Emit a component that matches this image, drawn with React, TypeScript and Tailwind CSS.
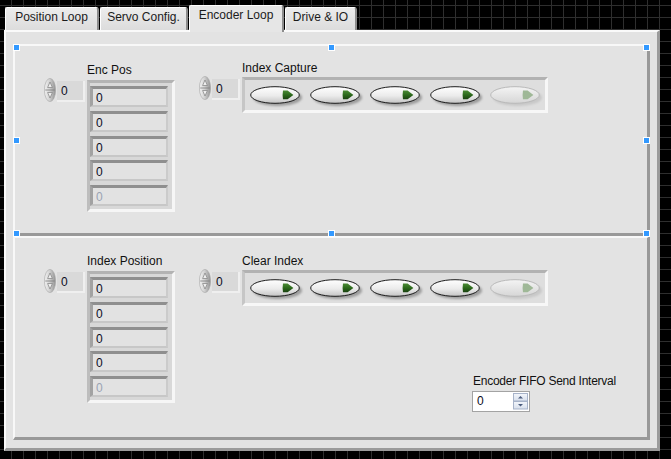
import React from "react";

const tabs = [
  { label: "Position Loop", w: "w-[94px]" },
  { label: "Servo Config.", w: "w-[88px]" },
  { label: "Encoder Loop", w: "w-[95px]", active: true },
  { label: "Drive & IO", w: "w-[72px]" },
];

function Tab({ label, w, active }: { label: string; w: string; active?: boolean }) {
  if (active) {
    return (
      <div
        className={`${w} relative z-10 -mb-[2px] ml-[1px] h-[27px] border-t border-l border-t-white border-l-white border-r-2 border-r-[#8c8c8c] rounded-tr-[3px] rounded-tl-[2px] bg-[#e6e6e6] pt-[2px] text-center text-[12px] leading-[14px] text-[#1b1b1b]`}
      >
        {label}
      </div>
    );
  }
  return (
    <div
      className={`${w} ml-[1px] first:ml-0 h-[23px] border-t border-l border-t-white border-l-white border-r-2 border-r-[#8c8c8c] rounded-tr-[3px] rounded-tl-[2px] bg-[linear-gradient(#ececec,#dcdcdc)] pt-[2px] text-center text-[12px] leading-[14px] text-[#1b1b1b]`}
    >
      {label}
    </div>
  );
}

/** LabVIEW index spinner */
function Spinner() {
  return (
    <svg width="12" height="24" viewBox="0 0 12 24" className="shrink-0">
      <defs>
        <linearGradient id="spin" x1="0" x2="1" y1="0" y2="0">
          <stop offset="0" stopColor="#f4f4f4" />
          <stop offset="0.45" stopColor="#d2d2d2" />
          <stop offset="1" stopColor="#929292" />
        </linearGradient>
      </defs>
      <ellipse cx="6" cy="12" rx="5.6" ry="11.6" fill="url(#spin)" stroke="#a4a4a4" strokeWidth="0.6" />
      <path d="M3.6 9.5 L6 4 L8.4 9.5 Z" fill="#eeeeee" stroke="#808080" strokeWidth="0.7" />
      <line x1="1.2" x2="10.8" y1="12" y2="12" stroke="#7c7c7c" strokeWidth="0.8" />
      <path d="M3.6 14.5 L6 20 L8.4 14.5 Z" fill="#eeeeee" stroke="#808080" strokeWidth="0.7" />
    </svg>
  );
}

function IndexBox() {
  return (
    <div className="ml-[1px] mt-[3px] h-[21px] w-[28px] shrink-0 border-r-2 border-b-2 border-r-[#efefef] border-b-[#efefef] bg-[#d9d9d9] pl-[4px] pt-[3px] text-[12px] leading-[14px] text-[#0c0c22]">
      0
    </div>
  );
}

function NumArray() {
  return (
    <div className="flex w-[88px] flex-col gap-[3.75px] border-t-[3px] border-l-[3px] border-r-[3px] border-b-[3px] border-t-[#b3b3b3] border-l-[#bdbdbd] border-r-[#f6f6f6] border-b-[#f6f6f6] bg-[#d8d8d8] pt-[3px] pb-[3px]">
      {[0, 1, 2, 3, 4].map((i) => (
        <div
          key={i}
          className={`h-[21px] w-[78px] border-t-[3px] border-l-[3px] border-r-2 border-b-2 border-t-[#8f8f8f] border-l-[#a2a2a2] border-r-[#cbcbcb] border-b-[#c7c7c7] bg-[#e2e2e2] pl-[3px] pt-[2px] text-[12px] leading-[14px] ${
            i === 4 ? "text-[#9aa3b2]" : "text-[#0c0c22]"
          }`}
        >
          0
        </div>
      ))}
    </div>
  );
}

function LedButton({ disabled }: { disabled?: boolean }) {
  return (
    <svg width="56" height="22" viewBox="0 0 56 22" className="shrink-0">
      <defs>
        <linearGradient id="btnFace" x1="0" x2="0" y1="0" y2="1">
          <stop offset="0" stopColor="#ffffff" />
          <stop offset="0.55" stopColor="#ebebeb" />
          <stop offset="1" stopColor="#c4c4c4" />
        </linearGradient>
        <linearGradient id="btnFaceOff" x1="0" x2="0" y1="0" y2="1">
          <stop offset="0" stopColor="#f4f4f4" />
          <stop offset="1" stopColor="#d6d6d6" />
        </linearGradient>
        <linearGradient id="led" x1="0" x2="0" y1="0" y2="1">
          <stop offset="0" stopColor="#4a8a34" />
          <stop offset="0.5" stopColor="#2c6a1c" />
          <stop offset="1" stopColor="#1a4210" />
        </linearGradient>
        <filter id="soft" x="-20%" y="-40%" width="140%" height="180%">
          <feGaussianBlur stdDeviation="1.2" />
        </filter>
      </defs>
      <ellipse
        cx="27.5"
        cy="11.5"
        rx="24.5"
        ry="8.5"
        fill={disabled ? "#c8c8c8" : "#9d9d9d"}
        filter="url(#soft)"
      />
      <ellipse
        cx="25"
        cy="9"
        rx="24.3"
        ry="8.3"
        fill={disabled ? "url(#btnFaceOff)" : "url(#btnFace)"}
        stroke={disabled ? "#b9b9b9" : "#1c1c1c"}
        strokeWidth="1"
      />
      <path
        d="M33 4.6 H37.6 L43.4 8.9 L37.6 13.2 H33 Q32.2 8.9 33 4.6 Z"
        fill={disabled ? "#9fb897" : "url(#led)"}
      />
    </svg>
  );
}

function BoolArray() {
  return (
    <div className="flex h-[36px] w-[306px] gap-[4px] border-t-[3px] border-l-[3px] border-r-[3px] border-b-[3px] border-t-[#b2b2b2] border-l-[#c6c6c6] border-r-[#f7f7f7] border-b-[#f7f7f7] bg-[#dedede] pl-[5px] pt-[6px]">
      {[0, 1, 2, 3, 4].map((i) => (
        <LedButton key={i} disabled={i === 4} />
      ))}
    </div>
  );
}

function NumGroup({ label, mt }: { label: string; mt: string }) {
  return (
    <div className={`flex flex-col ${mt}`}>
      <div className="ml-[43px] text-[12px] leading-[14px] text-[#111]">{label}</div>
      <div className="mt-[1px] flex items-start">
        <Spinner />
        <IndexBox />
        <div className="ml-[2px] mt-[2px]">
          <NumArray />
        </div>
      </div>
    </div>
  );
}

function BoolGroup({ label, mt, children }: { label: string; mt: string; children?: React.ReactNode }) {
  return (
    <div className={`ml-[24px] flex flex-col ${mt}`}>
      <div className="ml-[43px] text-[12px] leading-[14px] text-[#111]">{label}</div>
      <div className="mt-[1px] flex items-start">
        <Spinner />
        <IndexBox />
        <div className="ml-[2px] mt-[1px]">
          <BoolArray />
        </div>
      </div>
      {children}
    </div>
  );
}

function Handle({ pos }: { pos: string }) {
  return <div className={`absolute h-[7px] w-[7px] border border-white bg-[#3399ff] ${pos}`} />;
}

function FifoControl() {
  return (
    <div className="ml-[274px] mt-[68px] flex flex-col">
      <div className="whitespace-nowrap text-[12px] leading-[14px] tracking-[-0.25px] text-[#111]">
        Encoder FIFO Send Interval
      </div>
      <div className="-ml-[1px] mt-[3px] flex h-[21px] w-[58px] border border-[#a3a3a3] bg-white">
        <div className="flex-1 pl-[4px] pt-[2px] text-[12px] leading-[14px] text-[#0c0c22]">0</div>
        <svg width="15" height="17" viewBox="0 0 15 17" className="mr-[1px] mt-[1px]">
          <defs>
            <linearGradient id="sb" x1="0" x2="0" y1="0" y2="1">
              <stop offset="0" stopColor="#f3f6fb" />
              <stop offset="1" stopColor="#d7dfec" />
            </linearGradient>
          </defs>
          <rect x="0.5" y="0.5" width="14" height="7.5" fill="url(#sb)" stroke="#a7b3c9" />
          <rect x="0.5" y="8.5" width="14" height="7.5" fill="url(#sb)" stroke="#a7b3c9" />
          <path d="M5 5.5 L7.5 3 L10 5.5 Z" fill="#4b5c7e" />
          <path d="M5 11 L7.5 13.5 L10 11 Z" fill="#4b5c7e" />
        </svg>
      </div>
    </div>
  );
}

export default function App() {
  return (
    <div className="flex h-[459px] w-[671px] flex-col overflow-hidden bg-black bg-[linear-gradient(to_right,#2e2e2e_1px,transparent_1px),linear-gradient(to_bottom,#2e2e2e_1px,transparent_1px)] bg-[size:12px_12px] bg-[position:11px_5px] pl-[4px] pt-[5px] font-['Liberation_Sans',Arial,sans-serif]">
      {/* tab strip */}
      <div className="flex h-[25px] items-end pl-[1px]">
        {tabs.map((t) => (
          <Tab key={t.label} {...t} />
        ))}
      </div>

      {/* tab page */}
      <div className="h-[421px] w-[656px] border-t-2 border-l-2 border-r-[3px] border-b-[3px] border-t-[#fafafa] border-l-[#fafafa] border-r-[#9b9b9b] border-b-[#9b9b9b] bg-[#e3e3e3] pl-[7px] pt-[12px]">
        {/* upper decoration (selected) */}
        <div className="relative h-[192px] w-[637px] border-t-2 border-l-2 border-r-[3px] border-b-[3px] border-t-[#f8f8f8] border-l-[#f8f8f8] border-r-[#999999] border-b-[#999999]">
          <div className="flex pl-[29px]">
            <NumGroup label="Enc Pos" mt="mt-[17px]" />
            <BoolGroup label="Index Capture" mt="mt-[15px]" />
          </div>
          <Handle pos="left-[-2px] top-[-2px]" />
          <Handle pos="left-[313px] top-[-2px]" />
          <Handle pos="left-[628px] top-[-2px]" />
          <Handle pos="left-[-2px] top-[91px]" />
          <Handle pos="left-[628px] top-[91px]" />
          <Handle pos="left-[-2px] top-[184px]" />
          <Handle pos="left-[313px] top-[184px]" />
          <Handle pos="left-[628px] top-[184px]" />
        </div>

        {/* lower decoration */}
        <div className="h-[204px] w-[637px] border-t-2 border-l-2 border-r-[3px] border-b-[3px] border-t-[#f8f8f8] border-l-[#f8f8f8] border-r-[#999999] border-b-[#999999]">
          <div className="flex pl-[29px]">
            <NumGroup label="Index Position" mt="mt-[16px]" />
            <BoolGroup label="Clear Index" mt="mt-[16px]">
              <FifoControl />
            </BoolGroup>
          </div>
        </div>
      </div>
    </div>
  );
}
